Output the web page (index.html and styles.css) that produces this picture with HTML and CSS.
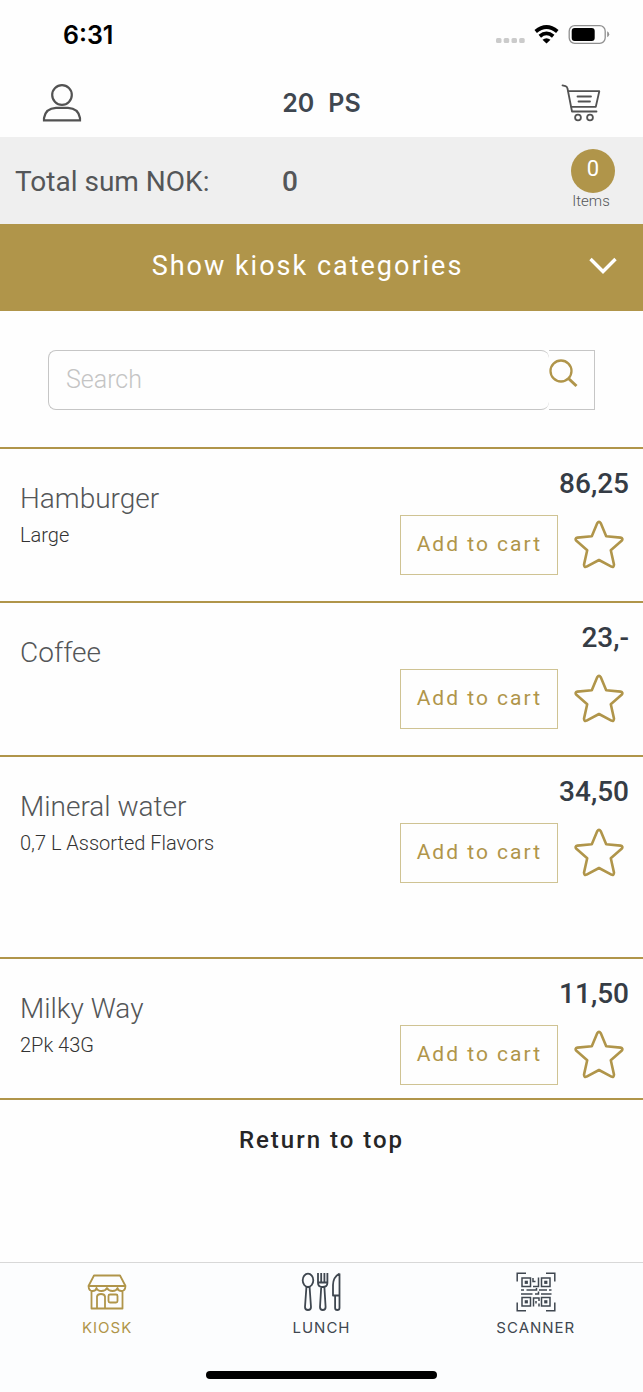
FILE: index.html
```html
<!DOCTYPE html>
<html lang="en">
<head>
<meta charset="utf-8">
<meta name="viewport" content="width=device-width, initial-scale=1">
<title>Kiosk</title>
<link rel="stylesheet" href="styles.css">
</head>
<body>
<svg class="defs" aria-hidden="true">
  <symbol id="star" viewBox="0 0 50 50"><path d="M23.2 3.2Q25 .6 26.8 3.2L32.2 16.3 46.6 17.6Q49.6 18.4 47.6 20.8L36.8 30.3 40 44.6Q40 47.6 37.4 46.6L25 40 12.6 46.6Q10 47.6 10 44.6L13.2 30.3 2.4 20.8Q.4 18.4 3.4 17.6L17.8 16.3Z" fill="none" stroke="currentColor" stroke-width="2.6" stroke-linejoin="round"/></symbol>
</svg>
<div class="app">
  <div class="status">
    <span class="clock">6:31</span>
    <svg class="status-icons" viewBox="0 0 114 24" aria-hidden="true">
      <g fill="#cbcbcb"><rect y="15" width="5.500" height="5" rx="1.500"/><rect x="7.700" y="15" width="5.500" height="5" rx="1.500"/><rect x="15.500" y="15" width="5.500" height="5" rx="1.500"/><rect x="23.200" y="15" width="5.500" height="5" rx="1.500"/></g>
      <g fill="none" stroke="#000" stroke-width="3.800"><path d="M39.700 8.500Q50.500-.5 61.300 8.500"/><path d="M43.800 13.200Q50.500 7.500 57.200 13.200"/></g>
      <path d="M46.500 16.800Q50.500 13.500 54.500 16.800L50.500 20.600Z"/>
      <rect x="73.200" y="2.700" width="36" height="17.600" rx="5.500" fill="none" stroke="#8f8f8f" stroke-width="1.300"/>
      <rect x="75.700" y="5" width="23" height="13" rx="3"/>
      <path d="M111.200 8.300v6q2-.8 2-3t-2-3" fill="#8f8f8f"/>
    </svg>
  </div>
  <header class="top">
    <button class="icon-button" aria-label="Profile">
      <svg viewBox="0 0 40 40" width="40" height="40" fill="none" stroke="#525252" stroke-width="2.200"><circle cx="20" cy="12" r="9.800"/><path d="M2 37.300V35Q3.500 25.300 14 24.800H26Q36.500 25.300 38 35V37.300Z"/></svg>
    </button>
    <h1 class="balance"><span>20</span><span>PS</span></h1>
    <button class="icon-button" aria-label="Cart">
      <svg viewBox="0 0 40 40" width="40" height="40" fill="none" stroke="#525252" stroke-width="1.800" stroke-linecap="round" stroke-linejoin="round"><path d="M1.500 2.300 4.500 3.200Q6 3.700 6.500 5.500L11 28.500H35.500"/><path d="M7.500 8.200H38.300L34.800 23.800H10.400M16.500 13.500H30M17.500 18.500H29"/><circle cx="17" cy="34.500" r="2.900"/><circle cx="29" cy="34.500" r="2.900"/></svg>
    </button>
  </header>
  <section class="total">
    <span class="total-label">Total sum NOK:</span>
    <span class="total-sum">0</span>
    <div class="items"><span class="items-count">0</span><span class="items-label">Items</span></div>
  </section>
  <button class="categories">
    <span class="categories-label">Show kiosk categories</span>
    <svg viewBox="0 0 28 18" width="28" height="18" fill="none" stroke="#fff" stroke-width="3.400"><path d="M1.500 2 14 14.500 26.500 2"/></svg>
  </button>
  <form class="search">
    <input class="search-input" type="text" placeholder="Search" aria-label="Search">
    <button class="search-button" type="button" aria-label="Find">
      <svg viewBox="0 0 30 30" width="30" height="30" fill="none" stroke="currentColor"><circle cx="12" cy="12" r="10.500" stroke-width="2.300"/><path d="M19.500 19.500 27.500 27" stroke-width="3"/></svg>
    </button>
  </form>
  <main>
    <ul class="products">
      <li class="product">
        <div class="info"><h2 class="name">Hamburger</h2><p class="detail">Large</p></div>
        <div class="buy"><span class="price">86,25</span><div class="actions"><button class="add">Add to cart</button><button class="favorite" aria-label="Favorite Hamburger"><svg width="50" height="50"><use href="#star"/></svg></button></div></div>
      </li>
      <li class="product">
        <div class="info"><h2 class="name">Coffee</h2></div>
        <div class="buy"><span class="price">23,-</span><div class="actions"><button class="add">Add to cart</button><button class="favorite" aria-label="Favorite Coffee"><svg width="50" height="50"><use href="#star"/></svg></button></div></div>
      </li>
      <li class="product product-tall">
        <div class="info"><h2 class="name">Mineral water</h2><p class="detail">0,7 L Assorted Flavors</p></div>
        <div class="buy"><span class="price">34,50</span><div class="actions"><button class="add">Add to cart</button><button class="favorite" aria-label="Favorite Mineral water"><svg width="50" height="50"><use href="#star"/></svg></button></div></div>
      </li>
      <li class="product product-last">
        <div class="info"><h2 class="name">Milky Way</h2><p class="detail">2Pk 43G</p></div>
        <div class="buy"><span class="price">11,50</span><div class="actions"><button class="add">Add to cart</button><button class="favorite" aria-label="Favorite Milky Way"><svg width="50" height="50"><use href="#star"/></svg></button></div></div>
      </li>
    </ul>
    <button class="return">Return to top</button>
  </main>
  <nav class="tabs">
    <a class="tab tab-active" href="#kiosk">
      <svg viewBox="0 0 40 40" width="40" height="40" fill="none" stroke="currentColor" stroke-width="1.800" stroke-linejoin="round"><path d="M7 3.500H33L38.500 14H1.500ZM4.500 19V36.500H35.500V19M1.500 14Q1.800 19 5.500 19 9 19 9.500 16 10.500 19 14.500 19 18.500 19 20 16 21.500 19 25.500 19 29.500 19 30.500 16 31 19 34.500 19 38.200 19 38.500 14M10 36V24.500Q10.500 22 14 22T18 24.500V36"/><rect x="21.500" y="22.500" width="9" height="8" rx="1.500"/></svg>
      <span>KIOSK</span>
    </a>
    <a class="tab" href="#lunch">
      <svg viewBox="0 0 40 40" width="40" height="40" fill="none" stroke="currentColor" stroke-width="1.800" stroke-linejoin="round"><ellipse cx="7" cy="8.300" rx="5.300" ry="6.600"/><path d="M5.400 15.200 4 35Q4 38 7 38T10 35L8.600 15.200ZM17 1V11Q17 15 21.700 15T26.400 11V1M20.200 1V10.500M23.400 1V10.500M17 10.500H26.400M20.200 15.300 19 35Q19 38 21.800 38T24.600 35L23.400 15.300M38.500 1.500V36Q38.500 38 36.300 38T34.100 36V23.500H32V13Q32.200 5 38.500 1.500M34 23.500H38.500"/></svg>
      <span>LUNCH</span>
    </a>
    <a class="tab" href="#scanner">
      <svg viewBox="0 0 40 40" width="40" height="40" fill="none" stroke="currentColor" stroke-width="1.500"><path d="M1.200 9.500V1.200H10M30 1.200H38.800V9.500M1.200 30.500V38.800H10M30 38.800H38.800V30.500"/><rect x="6" y="6" width="8.500" height="8.500"/><rect x="25.500" y="6" width="8.500" height="8.500"/><rect x="6" y="25.500" width="8.500" height="8.500"/><rect x="25.500" y="25.500" width="8.500" height="8.500"/><path d="M17 6V9.500H19.500M22.500 5.500V14.500H17M5 18H8M10.500 18H20.500V16M23 18H31M33 18H35.500M5 22H16.500M19 22H22.500V19.500M25 22H35.500M17.500 34.500V26H23V29M20 29V31.500M23 31.500V34.500"/><g fill="currentColor" stroke="none"><rect x="8.700" y="8.700" width="3.200" height="3.200"/><rect x="28.200" y="8.700" width="3.200" height="3.200"/><rect x="8.700" y="28.200" width="3.200" height="3.200"/><rect x="28.200" y="28.200" width="3.200" height="3.200"/></g></svg>
      <span>SCANNER</span>
    </a>
    <div class="home-bar"></div>
  </nav>
</div>
</body>
</html>
```
FILE: styles.css
```css
:root {
  --gold: #b0954a;
  --slate: #3f4750;
  --gray: #545658;
}

* { box-sizing: border-box; }

body {
  margin: 0;
  background: #fefefe;
  color: var(--gray);
  font-family: Roboto, "Liberation Sans", sans-serif;
}

h1, h2, p, ul { margin: 0; padding: 0; font-weight: inherit; }
button { margin: 0; padding: 0; border: 0; background: none; color: inherit; font: inherit; }
svg { display: block; }
.defs { position: absolute; width: 0; height: 0; }

.app {
  display: flex;
  flex-direction: column;
  min-height: 100vh;
}

.status {
  display: flex;
  align-items: center;
  justify-content: space-between;
  height: 70px;
  padding: 0 33px 0 63px;
}

.clock {
  color: #000;
  font: 600 25px/32px Inter, sans-serif;
}

.status-icons { width: 114px; height: 24px; }

.top {
  display: grid;
  grid-template-columns: 1fr auto 1fr;
  align-items: center;
  height: 67px;
  padding: 0 42px 2px;
}

.icon-button:last-child { justify-self: end; }
.icon-button:first-child { justify-self: start; }

.balance {
  display: flex;
  gap: 14px;
  color: var(--slate);
  font: 600 25px/32px Inter, sans-serif;
}

.total {
  display: grid;
  grid-template-columns: 267px 1fr auto;
  align-items: center;
  height: 87px;
  padding: 0 28px 0 15px;
  background: #efefef;
  font-size: 28px;
  line-height: 36px;
}

.total-label,
.total-sum { padding-top: 2px; }

.total-sum { font-weight: 500; }

.items {
  display: flex;
  flex-direction: column;
  align-items: center;
}

.items-count {
  width: 44px;
  height: 44px;
  border-radius: 50%;
  background: var(--gold);
  color: #fff;
  font-size: 22px;
  line-height: 40px;
  text-align: center;
}

.items-label {
  padding: 0 4px 4px 0;
  font-size: 15px;
  font-weight: 300;
  line-height: 16px;
}

.categories {
  display: flex;
  align-items: center;
  height: 87px;
  padding: 0 26px 4px;
  background: var(--gold);
  color: #fff;
}

.categories-label {
  flex: 1;
  font-size: 27px;
  line-height: 36px;
  letter-spacing: 2px;
}

.search {
  display: flex;
  height: 136px;
  padding: 39px 48px 37px;
}

.search-input {
  flex: 1;
  min-width: 0;
  padding: 0 17px;
  border: 1px solid #c6c6c6;
  border-right: 0;
  border-radius: 8px;
  background: none;
  color: var(--gray);
  font: 300 25px/32px Roboto, sans-serif;
}

.search-input::placeholder { color: #c4c4c4; opacity: 1; }

.search-button {
  display: flex;
  width: 46px;
  padding-top: 8px;
  border: 1px solid #c6c6c6;
  border-left: 0;
  color: var(--gold);
}

.products {
  list-style: none;
  border-bottom: 2px solid var(--gold);
}

.product {
  display: flex;
  justify-content: space-between;
  padding: 17px 14px 26px 20px;
  border-top: 2px solid var(--gold);
}

.product-tall { padding-bottom: 74px; }
.product-last { padding-bottom: 13px; }

.info { padding-top: 15px; }

.name {
  font-size: 28px;
  font-weight: 300;
  line-height: 36px;
}

.detail {
  padding-top: 4px;
  color: #333;
  font-size: 20px;
  font-weight: 300;
  line-height: 28px;
}

.buy {
  display: flex;
  flex-direction: column;
  align-items: flex-end;
  gap: 13px;
}

.price {
  color: #353c45;
  font-size: 28px;
  font-weight: 500;
  line-height: 36px;
}

.actions {
  display: flex;
  align-items: center;
  gap: 16px;
  padding-right: 5px;
}

.add {
  height: 60px;
  padding: 0 15px 2px 16px;
  border: 1px solid #cfc393;
  color: var(--gold);
  font-size: 21px;
  letter-spacing: 2px;
}

.favorite { color: var(--gold); }

.return {
  display: block;
  margin: 0 auto;
  padding: 24px 0;
  color: #262626;
  font-size: 24px;
  font-weight: 500;
  line-height: 32px;
  letter-spacing: 2px;
}

.tabs {
  display: grid;
  grid-template-columns: repeat(3, 1fr);
  margin-top: auto;
  padding: 9px 0 13px;
  border-top: 1px solid #d8d8d8;
  background: #fcfdfe;
}

.tab {
  display: flex;
  flex-direction: column;
  align-items: center;
  gap: 6px;
  color: var(--slate);
  font: 400 15px/20px Inter, sans-serif;
  letter-spacing: 1px;
  text-decoration: none;
}

.tab-active { color: var(--gold); }

.home-bar {
  grid-column: 1 / -1;
  justify-self: center;
  width: 36%;
  height: 8px;
  margin-top: 33px;
  border-radius: 4px;
  background: #000;
}
```
